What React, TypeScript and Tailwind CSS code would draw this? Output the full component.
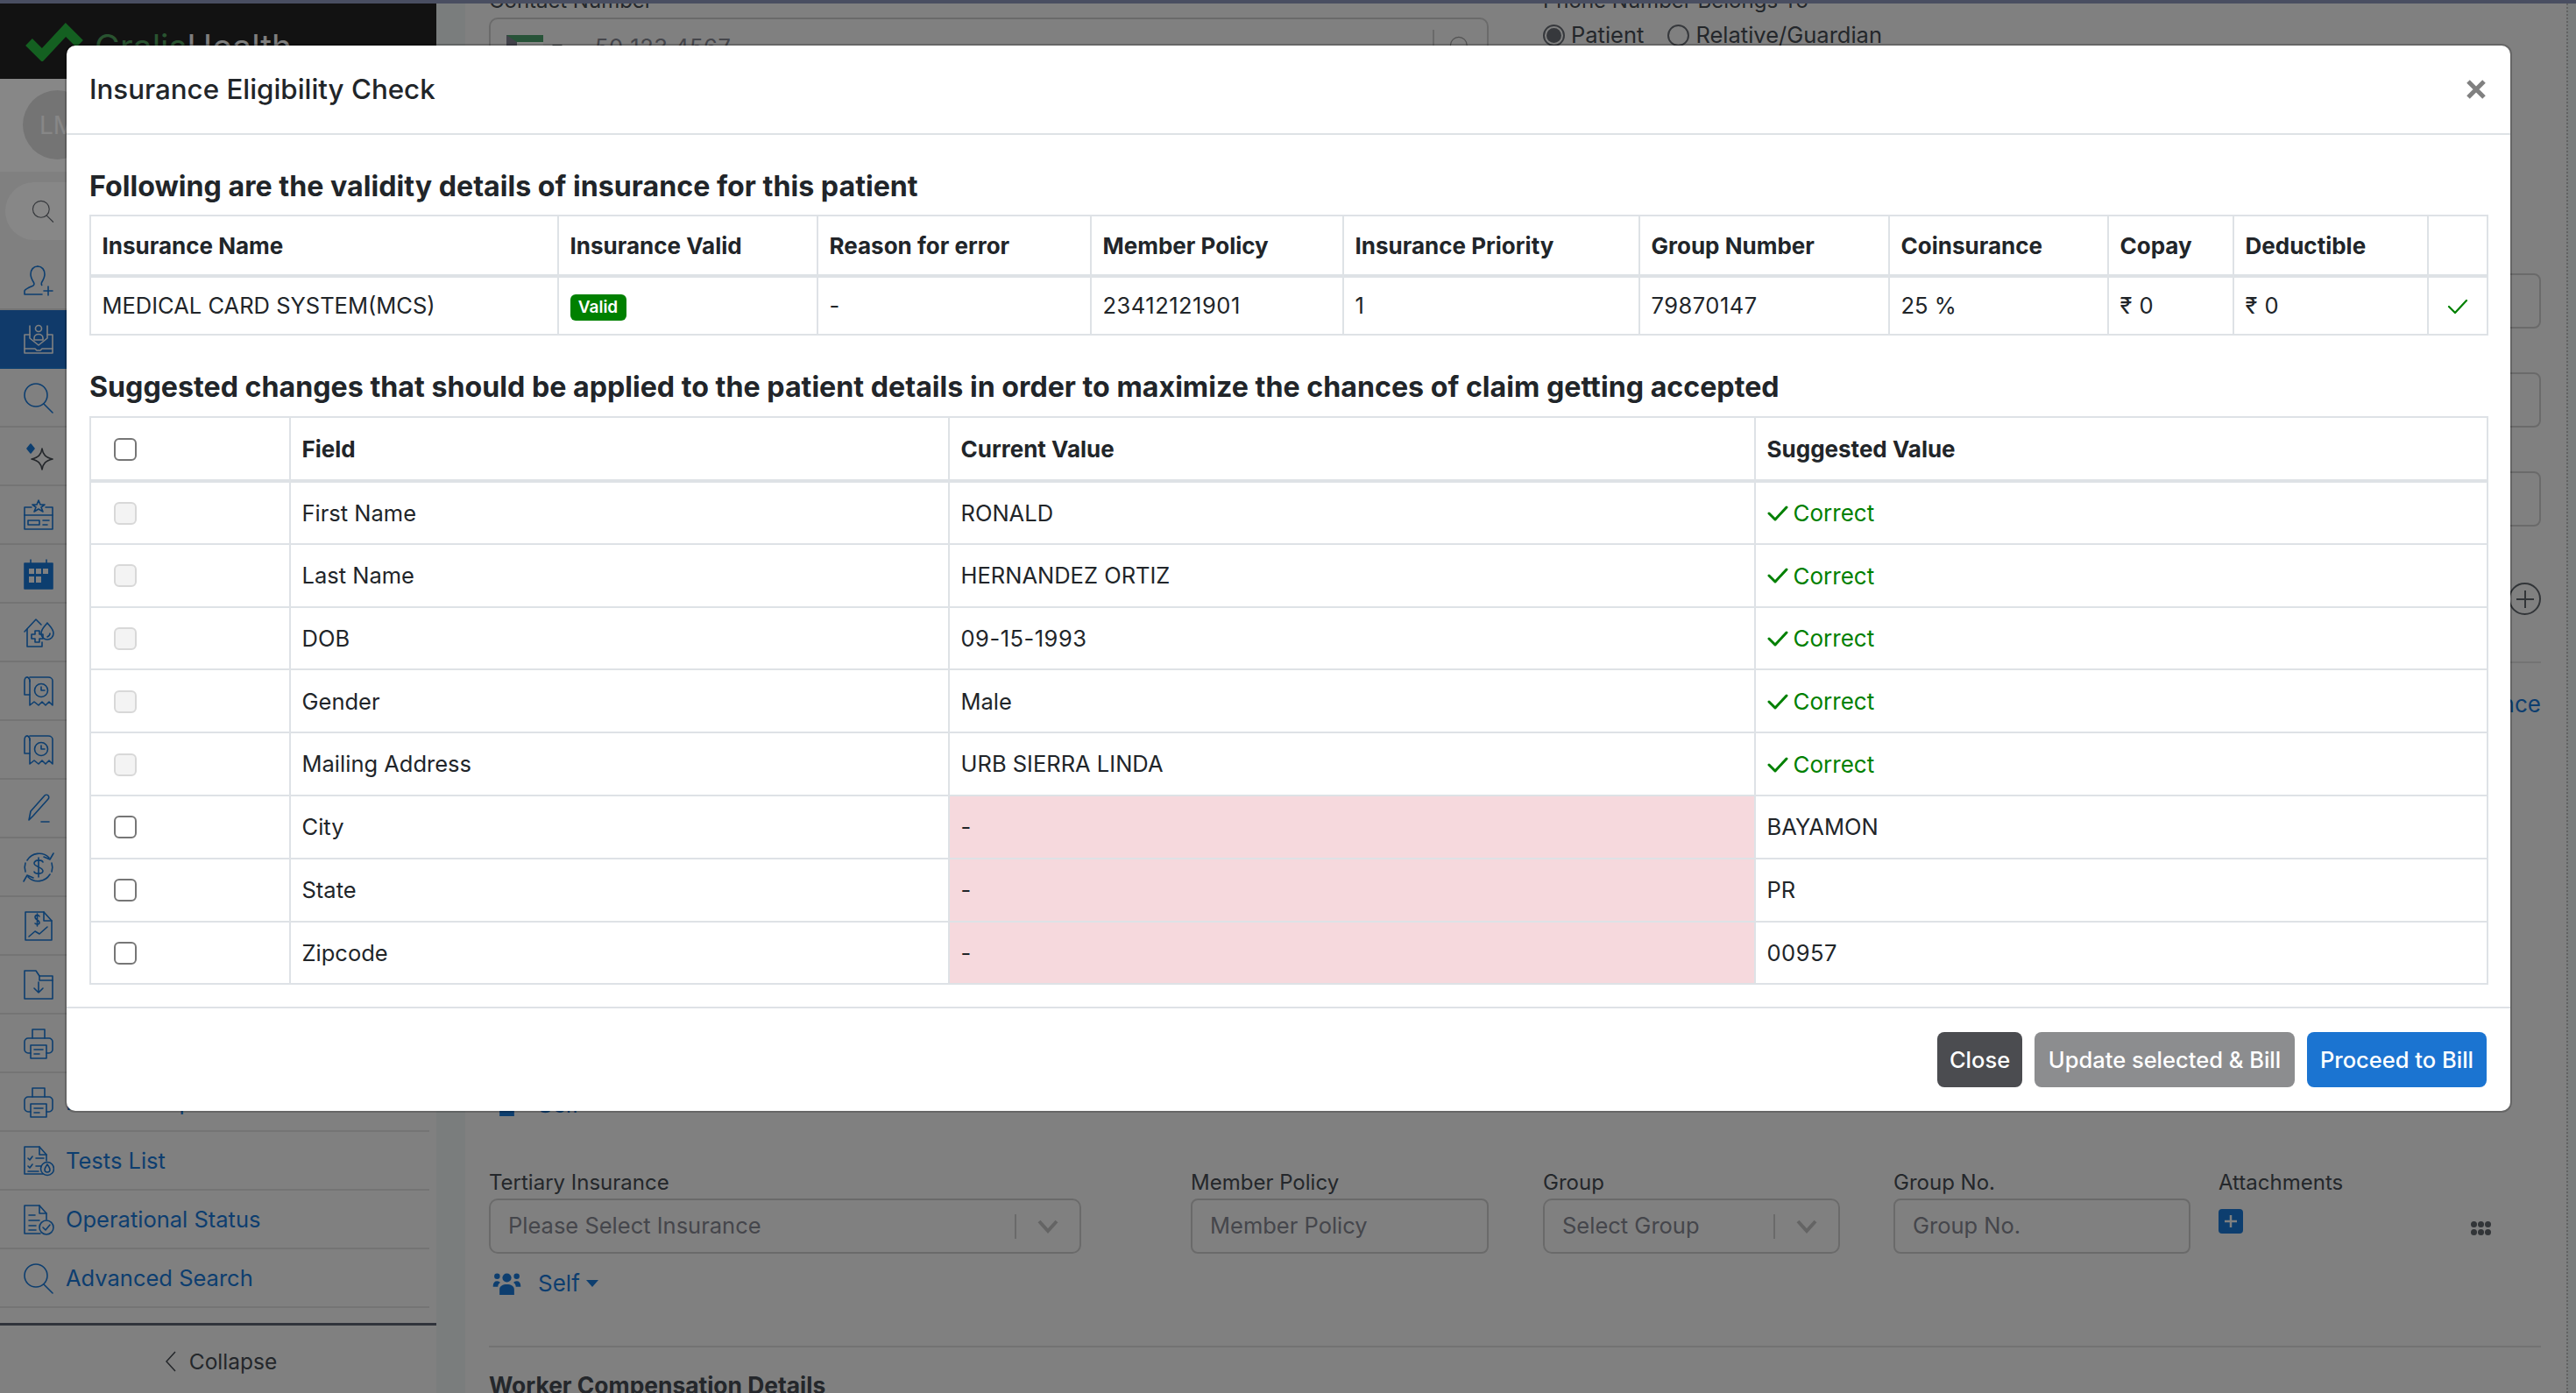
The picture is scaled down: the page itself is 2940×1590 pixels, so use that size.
import type { ReactNode } from "react";

const NAVY = "text-[#1976d2]";

function Icon({ children, className = NAVY }: { children: ReactNode; className?: string }) {
  return (
    <svg viewBox="0 0 36 36" fill="none" stroke="currentColor" strokeWidth="1.6" strokeLinecap="round" strokeLinejoin="round" className={`h-[36px] w-[36px] shrink-0 ${className}`}>
      {children}
    </svg>
  );
}

const receipt = (
  <>
    <path d="M8 2h21c3 0 5 2 5 4v28l-4-4-4 4-4-4-4 4-5-4-5 4V6C8 4 6 2 5 2" />
    <path d="M8 7C8 4 7 2 5 2S2 4 2 7v15h6" />
    <circle cx="21" cy="17" r="7.5" />
    <path d="M21 13v4h4" />
  </>
);

const printer = (
  <>
    <path d="M11 12V2h14v10" />
    <path d="M9 29H6c-2 0-4-2-4-4v-9c0-2 2-4 4-4h24c2 0 4 2 4 4v9c0 2-2 4-4 4h-3" />
    <path d="M9 20h18v15H9z" />
    <path d="M13 25h10M13 30h6" />
  </>
);

const search = (
  <>
    <circle cx="15" cy="15" r="13" />
    <path d="M24 25l10 10" />
  </>
);

const navRows: { icon: ReactNode; label?: string; active?: boolean }[] = [
  {
    icon: (
      <>
        <path d="M17 2c-5 0-8 4-8 9 0 4 2 7 3.500 9.500.8 1.500.5 3-1 3.700C7 26 3 27.500 2 30v4h20" />
        <path d="M17 2c5 0 8 4 8 9 0 4-2 7-3.500 9.500-.4 1-.4 2 .2 3" />
        <path d="M29 25v10M24 30h10" />
      </>
    ),
  },
  {
    active: true,
    icon: (
      <>
        <path d="M8 13H2v21h32V13h-6" />
        <path d="M2 29h12l2 2h4l2-2h12" />
        <path d="M8 3v14l10 8 10-8V3" />
        <circle cx="18" cy="6" r="3.500" />
        <path d="M13 17c0-6 10-6 10 0v2H13z" />
      </>
    ),
  },
  { icon: search },
  {
    icon: (
      <>
        <path d="M22 9c1 7 4 10 12 12-8 2-11 5-12 12-1-7-4-10-12-12 8-2 11-5 12-12z" className="text-[#444a51]" />
        <path d="M9 4l4 5-4 5-4-5z" fill="currentColor" />
      </>
    ),
  },
  {
    icon: (
      <>
        <path d="M18 1l2 5h5l-4 3 2 5-5-3-5 3 2-5-4-3h5z" />
        <path d="M10 9H2v25h32V9h-8" />
        <path d="M2 18h32" />
        <path d="M6 24h13v5H6zM23 24h7M23 29h5" />
      </>
    ),
  },
  {
    icon: (
      <>
        <path d="M2 6h32v29H2zM9 2v6M27 2v6" fill="currentColor" />
        <path d="M7 12h6v6H7zM15 12h6v6h-6zM23 12h6v6h-6zM7 21h6v7H7zM15 21h6v7h-6z" fill="#f2f2f2" stroke="none" />
      </>
    ),
  },
  {
    icon: (
      <>
        <path d="M2 17L15 3l6 6" />
        <path d="M5 14v20h17v-5" />
        <path d="M10 20h4v-4h5v4h4v5h-4v4h-5v-4h-4z" />
        <path d="M28 7c-3 4-7 7-7 12a7 7 0 0 0 14 0c0-5-4-8-7-12z" />
        <path d="M31 19c0 2-1 3-3 4" />
      </>
    ),
  },
  { icon: receipt },
  { icon: receipt },
  {
    icon: (
      <>
        <path d="M7 31l2-10L25 3c1-1 3-1 4 0s1 3 0 4L12 26z" />
        <path d="M21 33h9" />
      </>
    ),
  },
  {
    icon: (
      <>
        <path d="M5 10A16 16 0 0 1 30 7M35 2l-4 7-7-3" />
        <path d="M31 26A16 16 0 0 1 6 29M1 34l4-7 7 3" />
        <path d="M3 13a16 16 0 0 0 0 10M33 13a16 16 0 0 1 0 10" />
        <path d="M23 12c-1-3-9-3-10 1s10 5 10 9-9 4-10 1M18 7v22" />
      </>
    ),
  },
  {
    icon: (
      <>
        <path d="M3 2h21l9 10v22H3z" />
        <path d="M24 2v10h9" />
        <path d="M19 7c-1-2-5-2-5 1s5 3 5 6-4 2-5 1M16.500 4v14" />
        <path d="M7 30l7-6 5 3 9-8" />
      </>
    ),
  },
  {
    icon: (
      <>
        <path d="M2 34V2h13l4 6h15v26z" />
        <path d="M19 8v5h15" />
        <path d="M18 15v12M13 22l5 5 5-5" />
      </>
    ),
  },
  { icon: printer },
  { icon: printer, label: "Print Receipt" },
  {
    label: "Tests List",
    icon: (
      <>
        <path d="M23 33H2V2h17l8 9v7" />
        <path d="M19 2v9h8" />
        <path d="M6 15l2 2 3-4M15 15h9M6 24l2 2 3-4M15 24h6M6 30h12" />
        <circle cx="28" cy="27" r="7.500" />
        <path d="M28 22c-2 3-3 4-3 6a3 3 0 0 0 6 0c0-2-1-3-3-6z" />
      </>
    ),
  },
  {
    label: "Operational Status",
    icon: (
      <>
        <path d="M20 34H2V2h17l8 9v7" />
        <path d="M19 2v9h8" />
        <path d="M7 13h7M7 19h12M7 25h8M7 30h8" />
        <circle cx="27" cy="27" r="8" />
        <path d="M23 27l3 3 5-6" />
      </>
    ),
  },
  { label: "Advanced Search", icon: search },
];

function Sidebar() {
  return (
    <aside className="flex h-full w-[498px] shrink-0 flex-col">
      <div className="flex h-[86px] items-start bg-[#222222] pl-[27px] pt-[22px]">
        <svg viewBox="0 0 70 44" className="h-[44px] w-[70px] shrink-0">
          <path d="M6 22l15 15L48 8l16 16" fill="none" stroke="#27b53f" strokeWidth="11" strokeLinejoin="miter" />
        </svg>
        <span className="ml-[11px] text-[39px] leading-[56px]">
          <span className="text-[#4f9d5c]">Gralis</span>
          <span className="text-[#eeeeee]">Health</span>
        </span>
      </div>
      <div className="flex h-[106px] items-start bg-white pl-[26px] pt-[13px]">
        <div className="flex h-[79px] w-[79px] items-center justify-center rounded-full bg-[#dcdcdc] text-[28px] text-white">LM</div>
      </div>
      <div className="h-[91px] pl-[6px] pt-[12px]">
        <div className="flex h-[66px] w-[470px] items-center rounded-full bg-white pl-[30px]">
          <Icon className="text-[#666b72] !h-[26px] !w-[26px]">{search}</Icon>
        </div>
      </div>
      <nav className="flex w-[490px] flex-col">
        {navRows.map((row, i) => (
          <div
            key={i}
            className={`flex h-[67px] items-center gap-[13px] border-b-2 pl-[26px] pt-[1px] text-[25.500px] ${
              row.active ? "border-[#1976d2] bg-[#1f6fc9]" : "border-[#dcdcdc] text-[#1976d2]"
            }`}
          >
            <Icon className={row.active ? "text-[#f2f2f2]" : NAVY}>{row.icon}</Icon>
            {row.label}
          </div>
        ))}
      </nav>
      <div className="mt-[17px] flex flex-1 items-center justify-center gap-[14px] border-t-[3px] border-[#5c6070] pl-[6px] pt-[5px] text-[24.500px] text-[#444a51]">
        <svg viewBox="0 0 14 24" fill="none" stroke="currentColor" strokeWidth="1.5" className="h-[24px] w-[14px]">
          <path d="M12 1L2 12l10 11" />
        </svg>
        Collapse
      </div>
    </aside>
  );
}

function Label({ children }: { children: ReactNode }) {
  return <div className="h-[37px] text-[24px] leading-[37px] text-[#444a51]">{children}</div>;
}

function TextBox({ placeholder, className }: { placeholder: string; className: string }) {
  return (
    <div className={`flex h-[63px] shrink-0 items-center rounded-[8px] border-2 border-[#c9c9c9] pl-[20px] text-[25.500px] text-[#82848f] ${className}`}>
      {placeholder}
    </div>
  );
}

function SelectBox({ placeholder }: { placeholder: string }) {
  return (
    <div className="flex h-[63px] items-center rounded-[10px] border-2 border-[#c9c9c9] pl-[20px] text-[25.500px] text-[#82848f]">
      <span className="flex-1">{placeholder}</span>
      <span className="h-[28px] w-[2px] bg-[#c9c9c9]" />
      <svg viewBox="0 0 24 16" fill="none" stroke="#bdbdbd" strokeWidth="4" className="mx-[24px] h-[16px] w-[24px]">
        <path d="M2 2l10 11L22 2" />
      </svg>
    </div>
  );
}

function SelfMenu() {
  return (
    <div className="flex h-[39px] items-center pl-[4px] text-[26px] text-[#1976d2]">
      <svg viewBox="0 0 34 28" fill="currentColor" className="h-[26px] w-[33px]">
        <circle cx="17" cy="7" r="5.500" />
        <circle cx="5" cy="5" r="3.500" />
        <circle cx="29" cy="5" r="3.500" />
        <path d="M8 28v-7c0-4 4-6 9-6s9 2 9 6v7zM0 17c0-4 2-6 5-6 2 0 3 1 4 2-2 1-3 3-3 5H0zM34 17c0-4-2-6-5-6-2 0-3 1-4 2 2 1 3 3 3 5h6z" />
      </svg>
      <span className="ml-[19px]">Self</span>
      <span className="ml-[7px] h-0 w-0 border-x-[7px] border-t-[8px] border-x-transparent border-t-[#1976d2]" />
    </div>
  );
}

function Radio({ checked, label }: { checked?: boolean; label: string }) {
  return (
    <div className="flex items-center gap-[7px] text-[25.500px] text-[#444a51]">
      <span className="flex h-[25px] w-[25px] items-center justify-center rounded-full border-2 border-[#666b72]">
        {checked && <span className="h-[17px] w-[17px] rounded-full bg-[#666b72]" />}
      </span>
      {label}
    </div>
  );
}

function MainForm() {
  return (
    <main className="flex h-full flex-1 flex-col overflow-hidden pl-[27px] pr-[29px]">
      <div className="-mt-[22px] flex shrink-0 gap-[62px]">
        <div className="w-[1141px]">
          <div className="h-[38px] text-[24px] leading-[38px] text-[#444a51]">Contact Number</div>
          <div className="flex h-[63px] items-center rounded-[10px] border-2 border-[#c9c9c9] pl-[18px] pt-[5px] text-[25.500px] text-[#82848f]">
            <span className="h-[28px] w-[42px] border-l-[12px] border-t-[8px] border-l-[#7d7d8c] border-t-[#4a9e6b] bg-white" />
            <span className="ml-[10px] h-0 w-0 border-x-[6px] border-t-[6px] border-x-transparent border-t-[#444a51]" />
            <span className="ml-[37px] flex-1 tracking-[0.5px]">50 123 4567</span>
            <span className="h-[40px] w-[2px] bg-[#c9c9c9]" />
            <Icon className="mx-[17px] !h-[26px] !w-[26px] text-[#9a9a9a]">{search}</Icon>
          </div>
        </div>
        <div>
          <div className="h-[38px] text-[24px] leading-[38px] text-[#444a51]">Phone Number Belongs To</div>
          <div className="flex h-[40px] gap-[27px]">
            <Radio checked label="Patient" />
            <Radio label="Relative/Guardian" />
          </div>
        </div>
      </div>

      <TextBox placeholder="" className="mt-[229px] w-[400px] self-end" />
      <TextBox placeholder="" className="mt-[50px] w-[400px] self-end" />
      <TextBox placeholder="" className="mt-[50px] w-[400px] self-end" />
      <div className="mt-[64px] flex h-[37px] w-[37px] shrink-0 items-center justify-center self-end rounded-full border-2 border-[#5f646b] text-[#5f646b]">
        <svg viewBox="0 0 20 20" stroke="currentColor" strokeWidth="2" className="h-[20px] w-[20px]">
          <path d="M10 0v20M0 10h20" />
        </svg>
      </div>
      <div className="mt-[53px] h-[2px] w-[400px] shrink-0 self-end bg-[#d9d9d9]" />
      <div className="mt-[27px] shrink-0 self-end text-[26px] leading-[39px] text-[#1976d2]">Add Insurance</div>

      <div className="mt-[418px] shrink-0">
        <SelfMenu />
      </div>

      <div className="mt-[51px] flex shrink-0">
        <div className="w-[676px]">
          <Label>Tertiary Insurance</Label>
          <SelectBox placeholder="Please Select Insurance" />
        </div>
        <div className="ml-[125px] w-[340px]">
          <Label>Member Policy</Label>
          <TextBox placeholder="Member Policy" className="" />
        </div>
        <div className="ml-[62px] w-[339px]">
          <Label>Group</Label>
          <SelectBox placeholder="Select Group" />
        </div>
        <div className="ml-[61px] w-[339px]">
          <Label>Group No.</Label>
          <TextBox placeholder="Group No." className="" />
        </div>
        <div className="ml-[32px] w-[311px]">
          <Label>Attachments</Label>
          <div className="flex items-start justify-between pt-[12px]">
            <span className="flex h-[28px] w-[28px] items-center justify-center rounded-[4px] bg-[#1976d2] text-[#f2f2f2]">
              <svg viewBox="0 0 14 14" stroke="currentColor" strokeWidth="2.500" className="h-[14px] w-[14px]">
                <path d="M7 0v14M0 7h14" />
              </svg>
            </span>
            <svg viewBox="0 0 23 16" fill="#5f646b" className="mt-[14px] h-[16px] w-[23px]">
              <circle cx="3.500" cy="3.500" r="3.500" />
              <circle cx="11.500" cy="3.500" r="3.500" />
              <circle cx="19.500" cy="3.500" r="3.500" />
              <circle cx="3.500" cy="12.500" r="3.500" />
              <circle cx="11.500" cy="12.500" r="3.500" />
              <circle cx="19.500" cy="12.500" r="3.500" />
            </svg>
          </div>
        </div>
      </div>

      <div className="mt-[14px] shrink-0">
        <SelfMenu />
      </div>
      <div className="mt-[52px] h-[2px] shrink-0 bg-[#d9d9d9]" />
      <div className="mt-[24px] shrink-0 text-[26.400px] font-bold leading-[39px] text-[#444a51]">Worker Compensation Details</div>
    </main>
  );
}

function Check({ className }: { className: string }) {
  return (
    <svg viewBox="0 0 24 18" fill="none" stroke="#008000" strokeLinecap="round" strokeLinejoin="round" className={className}>
      <path d="M2 9l7 7L22 2" />
    </svg>
  );
}

const TH = "border-2 border-b-4 border-[#dee2e6] px-[12.500px] pt-[1px] text-left text-[26px] font-bold";
const TD = "border-2 border-[#dee2e6] px-[12.500px] pt-[1px] font-normal";
const DIGITS = "tracking-[0.5px]";

const validityCols = ["w-[534px]", "w-[296px]", "w-[312px]", "w-[288px]", "w-[338px]", "w-[285px]", "w-[250px]", "w-[143px]", "w-[222px]", "w-[68px]"];
const validityHeads = ["Insurance Name", "Insurance Valid", "Reason for error", "Member Policy", "Insurance Priority", "Group Number", "Coinsurance", "Copay", "Deductible", ""];

function ValidityTable() {
  return (
    <table className="w-[2736px] table-fixed border-collapse">
      <colgroup>
        {validityCols.map((c, i) => (
          <col key={i} className={c} />
        ))}
      </colgroup>
      <thead>
        <tr className="h-[69px]">
          {validityHeads.map((h, i) => (
            <th key={i} className={TH}>{h}</th>
          ))}
        </tr>
      </thead>
      <tbody>
        <tr className="h-[67px]">
          <td className={TD}>MEDICAL CARD SYSTEM(MCS)</td>
          <td className={TD}>
            <span className="inline-flex h-[30px] w-[64px] items-center justify-center rounded-[6px] bg-[#008000] align-middle text-[19px] font-semibold text-white">Valid</span>
          </td>
          <td className={TD}>-</td>
          <td className={`${TD} ${DIGITS}`}>23412121901</td>
          <td className={TD}>1</td>
          <td className={`${TD} ${DIGITS}`}>79870147</td>
          <td className={TD}>25 %</td>
          <td className={`${TD} ${DIGITS}`}>₹ 0</td>
          <td className={`${TD} ${DIGITS}`}>₹ 0</td>
          <td className={TD}>
            <Check className="ml-[8px] h-[18px] w-[24px] [stroke-width:2.200]" />
          </td>
        </tr>
      </tbody>
    </table>
  );
}

const suggestions: { field: string; current: string; suggested?: string; numeric?: boolean }[] = [
  { field: "First Name", current: "RONALD" },
  { field: "Last Name", current: "HERNANDEZ ORTIZ" },
  { field: "DOB", current: "09-15-1993", numeric: true },
  { field: "Gender", current: "Male" },
  { field: "Mailing Address", current: "URB SIERRA LINDA" },
  { field: "City", current: "-", suggested: "BAYAMON" },
  { field: "State", current: "-", suggested: "PR" },
  { field: "Zipcode", current: "-", suggested: "00957" },
];

function Box({ disabled }: { disabled?: boolean }) {
  return (
    <input
      type="checkbox"
      disabled={disabled}
      className={`block h-[26px] w-[26px] appearance-none rounded-[6px] border-2 ${
        disabled ? "border-[#d8d8d8] bg-[#f3f3f3]" : "border-[#767676] bg-white"
      }`}
    />
  );
}

function SuggestionsTable() {
  return (
    <table className="w-[2736px] table-fixed border-collapse">
      <colgroup>
        <col className="w-[228px]" />
        <col className="w-[752px]" />
        <col className="w-[920px]" />
        <col className="w-[836px]" />
      </colgroup>
      <thead>
        <tr className="h-[73px]">
          <th className={`${TH} pl-[26px]`}><Box /></th>
          <th className={TH}>Field</th>
          <th className={TH}>Current Value</th>
          <th className={TH}>Suggested Value</th>
        </tr>
      </thead>
      <tbody>
        {suggestions.map((s) => (
          <tr key={s.field} className="h-[71.800px]">
            <td className={`${TD} pl-[26px]`}><Box disabled={!s.suggested} /></td>
            <td className={TD}>{s.field}</td>
            <td className={`${TD} ${s.suggested ? "bg-[#f6d9dd]" : ""} ${s.numeric ? DIGITS : ""}`}>{s.current}</td>
            <td className={`${TD} ${s.field === "Zipcode" ? DIGITS : ""}`}>
              {s.suggested ?? (
                <span className="flex items-center gap-[6px] text-[26px] text-[#008000]">
                  <Check className="h-[18px] w-[24px] [stroke-width:3]" />
                  Correct
                </span>
              )}
            </td>
          </tr>
        ))}
      </tbody>
    </table>
  );
}

function EligibilityModal() {
  return (
    <div className="absolute left-[76px] top-[52px] w-[2789px] rounded-[10px] bg-white text-[25.500px] text-[#212529] shadow-[0_0_0_2px_rgba(0,0,0,0.2)]">
      <div className="flex h-[102px] items-center justify-between border-b-2 border-[#dee2e6] pl-[26px] pr-[28px]">
        <h5 className="text-[31.300px] font-medium">Insurance Eligibility Check</h5>
        <svg viewBox="0 0 22 22" stroke="#808080" strokeWidth="5" className="h-[22px] w-[22px]">
          <path d="M2 2l18 18M20 2L2 20" />
        </svg>
      </div>
      <div className="px-[26px] pb-[25px] pt-[42px]">
        <h6 className="mb-[15px] text-[32.200px] font-bold leading-[34px]">Following are the validity details of insurance for this patient</h6>
        <ValidityTable />
        <h6 className="mb-[16px] mt-[42px] text-[32.200px] font-bold leading-[34px]">Suggested changes that should be applied to the patient details in order to maximize the chances of claim getting accepted</h6>
        <SuggestionsTable />
      </div>
      <div className="flex h-[119px] items-center justify-end gap-[14px] border-t-2 border-[#dee2e6] pr-[27px]">
        <button className="h-[63px] w-[97px] rounded-[8px] bg-[#4b4c50] pt-[1px] text-[25.500px] font-medium text-white">Close</button>
        <button className="h-[63px] w-[297px] rounded-[8px] bg-[#8c8d8f] pt-[1px] text-[25.500px] font-medium text-white">Update selected &amp; Bill</button>
        <button className="h-[63px] w-[205px] rounded-[8px] bg-[#1b74d1] pt-[1px] text-[25.500px] font-medium text-white">Proceed to Bill</button>
      </div>
    </div>
  );
}

export default function App() {
  return (
    <div className="relative flex h-[1590px] w-[2940px] flex-col overflow-hidden bg-[#f2f2f2] font-['Inter',sans-serif]">
      <div className="h-[4px] shrink-0 bg-[#8a94b8]" />
      <div className="flex min-h-0 flex-1">
        <Sidebar />
        <div className="w-[33px] shrink-0 bg-[#e6ecec]" />
        <MainForm />
        <div className="w-[11px] shrink-0 border-l-2 border-dotted border-[#b9b9b9] bg-[#e6ecec]" />
      </div>
      <div className="absolute inset-0 bg-black/47" />
      <EligibilityModal />
    </div>
  );
}
